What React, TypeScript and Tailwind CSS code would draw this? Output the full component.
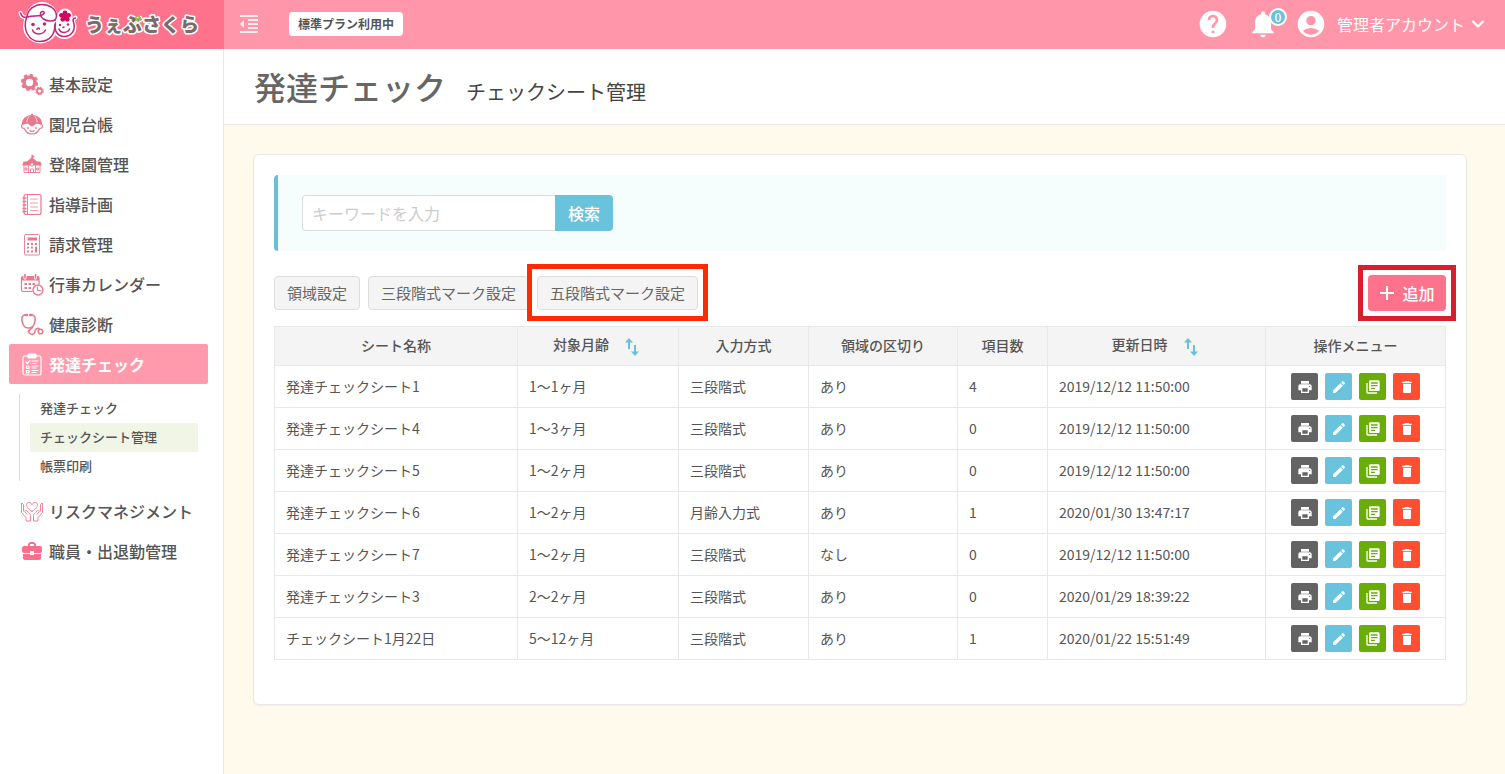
import type { ReactNode } from "react";
import {
  MdAccountCircle,
  MdBusinessCenter,
  MdDelete,
  MdEdit,
  MdFormatIndentDecrease,
  MdHelp,
  MdLibraryBooks,
  MdNotifications,
  MdPrint,
} from "react-icons/md";

function Logo() {
  return (
    <svg className="h-[48px] w-[204px]" viewBox="0 0 204 48" role="img">
      <g fill="#fff" stroke="#fff" strokeWidth="4" strokeLinejoin="round">
        <circle cx="42" cy="18" r="14" />
        <circle cx="40.500" cy="26" r="15.500" />
        <circle cx="64.500" cy="27" r="10" />
        <path d="M20.500 13c1 4 4 5 7 4M74 19l1.500-1.500" fill="none" strokeLinecap="round" />
        <circle cx="65" cy="16" r="5.500" />
      </g>
      <g fill="none" stroke="#c2257a" strokeWidth="1.500" strokeLinecap="round">
        <path d="M20.500 13c1 4 4 5 7 4 5-1.500 9-.5 13-1.500 4-1 5-4 2-4-3 0-3 5 1 7.500 4 2.500 9 2.500 11.500 1" />
        <path d="M27 16.500c1-7.500 8-12 15-12s14 4 14.500 11c0 2.500-.8 3.800-1.500 4.500" />
        <path d="M26.500 17.500c-4 12 2 24 13.500 24 10 0 15-7.500 15-17" />
        <path d="M55.500 23c-2 8 2.500 13.500 8.500 13.500 8 0 12.500-7 9-16 0-1.500 1-2.500 2.500-2.500" />
        <path d="M32.500 30c2 5 10 5.500 13 0M59 29c1.500 4.500 8.500 4.500 10.500 0" />
        <path d="M37 29.500c0-1.500 2-2 2.500-.5M63 27.500l1-.5" />
      </g>
      <g fill="#c2257a">
        <circle cx="33" cy="24.500" r="1.800" />
        <circle cx="44.500" cy="24" r="1.800" />
        <circle cx="60" cy="25" r="1.200" />
        <circle cx="68" cy="24.500" r="1.200" />
      </g>
      <g fill="#d3005f">
        <circle cx="65" cy="12.800" r="2.400" />
        <circle cx="68.500" cy="15.300" r="2.400" />
        <circle cx="67.200" cy="19.300" r="2.400" />
        <circle cx="62.800" cy="19.300" r="2.400" />
        <circle cx="61.500" cy="15.300" r="2.400" />
        <circle cx="65" cy="16.500" r="2.500" />
      </g>
      <text
        x="85"
        y="32"
        fontSize="19"
        fontWeight="900"
        fill="#7a6a69"
        stroke="#fff"
        strokeWidth="3"
        strokeLinejoin="round"
        paintOrder="stroke"
      >
        うぇぶさくら
      </text>
      <path d="M135.500 17.500l2 3M138.500 16l2 3" stroke="#8cc63f" strokeWidth="2" strokeLinecap="round" />
    </svg>
  );
}

function LineIcon({ children }: { children: ReactNode }) {
  return (
    <svg
      className="size-6 shrink-0"
      viewBox="0 0 24 24"
      fill="none"
      stroke="currentColor"
      strokeWidth="1.200"
      strokeLinecap="round"
      strokeLinejoin="round"
      aria-hidden="true"
    >
      {children}
    </svg>
  );
}

const icons = {
  gears: (
    <LineIcon>
      <circle cx="9.500" cy="10.500" r="5.500" strokeWidth="3.600" />
      <circle cx="9.500" cy="10.500" r="7.700" strokeWidth="2" strokeDasharray="3.300 2.750" strokeLinecap="butt" />
      <circle cx="19.500" cy="19" r="2.500" strokeWidth="1.800" />
      <circle cx="19.500" cy="19" r="3.700" strokeWidth="1.100" strokeDasharray="1.600 1.300" strokeLinecap="butt" />
    </LineIcon>
  ),
  child: (
    <LineIcon>
      <path d="M2.500 12C2.500 6.500 7 3.500 12 3.500s9.500 3 9.500 8.500c-5-1.500-14-1.500-19 0z" fill="currentColor" />
      <path d="M12 2.500v1" strokeWidth="2" />
      <path d="M9 4.500c-1.500 1.500-2 3.500-2 5.500M15 4.500c1.500 1.500 2 3.500 2 5.500" stroke="#fff" strokeWidth=".7" />
      <path d="M3 12.500c-2.500-.3-2 4 1.300 4M21 12.500c2.500-.3 2 4-1.300 4M4.300 16.500c1.500 3.500 4.500 5.500 7.700 5.500s6.200-2 7.700-5.500M10 18.500c1 1.200 3 1.200 4 0" />
      <path d="M8.500 11.500h7L12 14z" fill="currentColor" />
      <path d="M8 15.800v.3M16 15.800v.3" strokeWidth="1.800" />
    </LineIcon>
  ),
  school: (
    <LineIcon>
      <path d="M12 7V3M12 3.500l2 1-2 1" />
      <path d="M12 6L16.500 10h-9z" fill="currentColor" />
      <path d="M4 10h16l1 3H3z" fill="currentColor" />
      <path d="M4 13v7.500h16V13M8.500 13v7.500M15.500 13v7.500" strokeWidth=".9" />
      <path d="M10.500 20.500V17h3v3.500M5.500 16H7v2H5.500zM17 16h1.500v2H17z" strokeWidth=".9" />
      <circle cx="12" cy="12.500" r="1.700" fill="#fff" strokeWidth=".9" />
    </LineIcon>
  ),
  notebook: (
    <LineIcon>
      <rect x="4" y="2.500" width="17" height="20" rx="2" />
      <path d="M7.500 3v19" strokeWidth=".9" />
      <path d="M3 6h3M3 9.500h3M3 13h3M3 16.500h3M3 19.500h3" strokeWidth="1.300" />
      <path d="M10.500 7h7M10.500 11h7M10.500 15h7M10.500 18.500h7" strokeWidth=".7" />
    </LineIcon>
  ),
  calculator: (
    <LineIcon>
      <rect x="4.500" y="2.500" width="15" height="20.500" rx="1" strokeWidth=".9" />
      <path d="M7.500 7h9.500" strokeWidth="3" strokeLinecap="butt" />
      <path
        d="M7 12h2M11 12h2M15 12h2M7 15.700h2M11 15.700h2M15 15.700h2M7 19.500h2M11 19.500h2M15 19.500h2"
        strokeWidth="1.800"
        strokeLinecap="butt"
      />
      <path d="M16 15.500v4" strokeWidth="2" strokeLinecap="butt" />
    </LineIcon>
  ),
  calendar: (
    <LineIcon>
      <path d="M12 19.500H3c-1 0-1.500-.5-1.500-1.500V6c0-1 .5-1.500 1.500-1.500h14.500c1 0 1.500.5 1.500 1.500v6" />
      <path d="M2 5.500h16.500v2.500H2z" fill="currentColor" />
      <path d="M5 2.500v3.500M15.500 2.500v3.500" stroke="#fff" strokeWidth="3" />
      <path d="M5 2.500v3.500M15.500 2.500v3.500" strokeWidth="1.600" />
      <path d="M4.500 12H7M8.500 12H11M12.500 12H15M4.500 16H7M8.500 16H11" strokeWidth="2.200" strokeLinecap="butt" />
      <circle cx="18" cy="18" r="5" strokeWidth="1.400" fill="#fff" />
      <path d="M17.500 15v3.500h3" />
    </LineIcon>
  ),
  stethoscope: (
    <LineIcon>
      <g strokeWidth="1.600">
        <path d="M5.500 3C2 3 1.500 5.500 2 9c.6 4 3 7 6.500 7s5.900-3 6.500-7c.5-3.500 0-6-3.500-6" />
        <path d="M5.500 3H7M10 3h1.500" strokeWidth="2.400" />
        <path d="M8.500 20c1.500 3 6 3.500 6.500-.5.200-2.500 2-3.500 4-3" />
        <path d="M8.500 16.500v3.500" strokeWidth="0" />
        <path d="M12.500 15.500c-2 1.500-4 2.500-4 4.500" />
        <circle cx="20.500" cy="19.500" r="2.300" />
      </g>
    </LineIcon>
  ),
  checklist: (
    <LineIcon>
      <rect x="3" y="4" width="18" height="19" rx="2" />
      <rect x="8" y="2" width="8" height="4" rx="1" fill="currentColor" />
      <path d="M6 10l1.300 1.500L10 8.500M12 9h6M12 11.500h4M12 14h6M12 16h4M12 18.500h6M12 20.500h4" />
      <path d="M6.500 14H9v2.300H6.500zM6.500 18.500H9v2.300H6.500z" />
    </LineIcon>
  ),
  hands: (
    <LineIcon>
      <g strokeWidth=".9">
        <path d="M12 12.500C4.500 8 6 3.500 9 3.500c1.500 0 2.500 1 3 2 .5-1 1.500-2 3-2 3 0 4.500 4.500-3 9z" />
        <path d="M1.500 4.500v9l4.500 5v3.500h4.500v-5.500c0-1-1-2-2-3l-2-2c-1-.8-2.300.3-1.500 1.500l2 2.500M1.500 4.500c1.500-.5 2 .5 2 1.500v6" />
        <path d="M22.500 4.500v9L18 18.500v3.500h-4.500v-5.500c0-1 1-2 2-3l2-2c1-.8 2.300.3 1.500 1.500l-2 2.500M22.500 4.500c-1.500-.5-2 .5-2 1.500v6" />
      </g>
    </LineIcon>
  ),
  briefcase: <MdBusinessCenter className="size-6 shrink-0 text-[#f8708b]" aria-hidden="true" />,
};

function MenuItem({ icon, label, active = false }: { icon: ReactNode; label: string; active?: boolean }) {
  return (
    <a
      href="#"
      className={
        active
          ? "flex h-10 items-center gap-[5px] rounded-xs bg-[#ff9aad] pl-[11px] font-bold text-white"
          : "flex h-10 items-center gap-[5px] pl-[11px] font-medium text-[#555]"
      }
    >
      <span className={active ? "text-white" : "text-[#e8798d]"}>{icon}</span>
      {label}
    </a>
  );
}

function Sidebar() {
  return (
    <nav className="w-[224px] shrink-0 border-r border-[#e8e8e8] bg-white pt-[15px] pr-[15px] pl-[9px] text-base">
      <MenuItem icon={icons.gears} label="基本設定" />
      <MenuItem icon={icons.child} label="園児台帳" />
      <MenuItem icon={icons.school} label="登降園管理" />
      <MenuItem icon={icons.notebook} label="指導計画" />
      <MenuItem icon={icons.calculator} label="請求管理" />
      <MenuItem icon={icons.calendar} label="行事カレンダー" />
      <MenuItem icon={icons.stethoscope} label="健康診断" />
      <MenuItem icon={icons.checklist} label="発達チェック" active />
      <div className="my-[10px] ml-[10px] border-l border-[#ddd] pr-[10px] pl-[10px] text-[13px] font-medium text-[#555]">
        <a href="#" className="flex h-[29px] items-center px-[10px] pb-0.5">
          発達チェック
        </a>
        <a href="#" className="flex h-[29px] items-center rounded-xs bg-[#f0f5e6] px-[10px] pb-0.5">
          チェックシート管理
        </a>
        <a href="#" className="flex h-[29px] items-center px-[10px] pb-0.5">
          帳票印刷
        </a>
      </div>
      <MenuItem icon={icons.hands} label="リスクマネジメント" />
      <MenuItem icon={icons.briefcase} label="職員・出退勤管理" />
    </nav>
  );
}

function Header() {
  return (
    <header className="flex h-[49px] bg-[#ff96a9] text-white">
      <a href="#" className="flex w-[224px] shrink-0 bg-[#ff728c]" aria-label="うぇぶさくら">
        <Logo />
      </a>
      <div className="flex flex-1 items-center pr-5 pb-px pl-[13px]">
        <button type="button" aria-label="メニューを閉じる">
          <MdFormatIndentDecrease className="size-6 text-[#fdeef0]" />
        </button>
        <span className="ml-[28px] flex h-6 items-center rounded-sm bg-white px-[9px] text-xs font-bold text-[#555]">
          標準プラン利用中
        </span>
        <div className="ml-auto flex items-center">
          <button type="button" aria-label="ヘルプ">
            <MdHelp className="size-8" />
          </button>
          <button type="button" className="relative ml-[18px]" aria-label="お知らせ">
            <MdNotifications className="size-8" />
            <span className="absolute top-0 -right-2 flex size-[18px] items-center justify-center rounded-full border-2 border-white bg-[#6ac3dc] text-[12px] leading-none font-medium">
              0
            </span>
          </button>
          <button type="button" className="ml-4 flex items-center text-base">
            <MdAccountCircle className="mr-[10px] size-8" />
            管理者アカウント
            <svg
              className="ml-[6px] h-3 w-[14px]"
              viewBox="0 0 14 12"
              fill="none"
              stroke="currentColor"
              strokeWidth="2.200"
              aria-hidden="true"
            >
              <path d="M1.500 3L7 8.500 12.500 3" />
            </svg>
          </button>
        </div>
      </div>
    </header>
  );
}

function SortButton({ label }: { label: string }) {
  return (
    <button type="button" className="mr-1 ml-4 align-middle text-[#6bbfda]" aria-label={label}>
      <svg className="h-[18px] w-[14px]" viewBox="0 0 14 18" fill="currentColor" aria-hidden="true">
        <path d="M4 0l4 4.500H5V11H3V4.500H0zM10 18l-4-4.500h3V7h2v6.500h3z" />
      </svg>
    </button>
  );
}

const sheets = [
  { name: "発達チェックシート1", age: "1〜1ヶ月", input: "三段階式", divided: "あり", count: 4, updated: "2019/12/12 11:50:00" },
  { name: "発達チェックシート4", age: "1〜3ヶ月", input: "三段階式", divided: "あり", count: 0, updated: "2019/12/12 11:50:00" },
  { name: "発達チェックシート5", age: "1〜2ヶ月", input: "三段階式", divided: "あり", count: 0, updated: "2019/12/12 11:50:00" },
  { name: "発達チェックシート6", age: "1〜2ヶ月", input: "月齢入力式", divided: "あり", count: 1, updated: "2020/01/30 13:47:17" },
  { name: "発達チェックシート7", age: "1〜2ヶ月", input: "三段階式", divided: "なし", count: 0, updated: "2019/12/12 11:50:00" },
  { name: "発達チェックシート3", age: "2〜2ヶ月", input: "三段階式", divided: "あり", count: 0, updated: "2020/01/29 18:39:22" },
  { name: "チェックシート1月22日", age: "5〜12ヶ月", input: "三段階式", divided: "あり", count: 1, updated: "2020/01/22 15:51:49" },
];

const th = "h-[39px] border border-[#e8e8e8] bg-[#f4f4f4] px-0 pt-0 pb-0.5 text-center font-medium";
const td = "h-[42px] border border-[#e8e8e8] px-[11px] pt-0 pb-0.5";
const action = "flex size-[27px] items-center justify-center rounded-xs text-white";

function SheetTable() {
  return (
    <table className="mt-4 w-full table-fixed border-collapse text-sm text-[#555]">
      <thead>
        <tr>
          <th className={th}>シート名称</th>
          <th className={`${th} w-[161px]`}>
            対象月齢
            <SortButton label="対象月齢で並べ替え" />
          </th>
          <th className={`${th} w-[130px]`}>入力方式</th>
          <th className={`${th} w-[149px]`}>領域の区切り</th>
          <th className={`${th} w-[90px]`}>項目数</th>
          <th className={`${th} w-[218px]`}>
            更新日時
            <SortButton label="更新日時で並べ替え" />
          </th>
          <th className={`${th} w-[180px]`}>操作メニュー</th>
        </tr>
      </thead>
      <tbody>
        {sheets.map((sheet) => (
          <tr key={sheet.name}>
            <td className={td}>{sheet.name}</td>
            <td className={td}>{sheet.age}</td>
            <td className={td}>{sheet.input}</td>
            <td className={td}>{sheet.divided}</td>
            <td className={td}>{sheet.count}</td>
            <td className={td}>{sheet.updated}</td>
            <td className="h-[42px] border border-[#e8e8e8] p-0">
              <div className="flex justify-center gap-[7px]">
                <button type="button" className={`${action} bg-[#636363]`} aria-label="印刷">
                  <MdPrint className="size-4" />
                </button>
                <button type="button" className={`${action} bg-[#6ac3dc]`} aria-label="編集">
                  <MdEdit className="size-4" />
                </button>
                <button type="button" className={`${action} bg-[#6aac08]`} aria-label="複製">
                  <MdLibraryBooks className="size-4" />
                </button>
                <button type="button" className={`${action} bg-[#ff4e30]`} aria-label="削除">
                  <MdDelete className="size-4" />
                </button>
              </div>
            </td>
          </tr>
        ))}
      </tbody>
    </table>
  );
}

const settingButton = "h-[34px] rounded-sm border border-[#ddd] bg-[#f4f4f4] px-3 text-[15px] text-[#666]";

export default function App() {
  return (
    <div className="flex min-h-screen flex-col font-['Noto_Sans_CJK_JP',sans-serif]">
      <Header />
      <div className="flex flex-1">
        <Sidebar />
        <main className="min-w-0 flex-1 bg-[#fffaec]">
          <div className="flex h-[76px] items-baseline gap-5 border-b border-[#e8e8e8] bg-white pt-[13px] pl-[30px]">
            <h1 className="text-[32px] leading-[48px] font-medium text-[#666]">発達チェック</h1>
            <p className="text-xl text-[#444]">チェックシート管理</p>
          </div>

          <section className="mt-[29px] mr-[38px] mb-[69px] ml-[29px] rounded-md border border-[#e8e8e8] bg-white px-5 pt-5 pb-11 shadow-xs">
            <form className="flex h-[76px] items-center rounded-l-sm border-l-4 border-[#6bbfd4] bg-[#f5fdfd] pl-6">
              <input
                type="text"
                aria-label="キーワード"
                placeholder="キーワードを入力"
                className="h-9 w-[253px] rounded-l-sm border border-r-0 border-[#ddd] bg-white px-[9px] text-base placeholder:text-[#ccc]"
              />
              <button type="button" className="h-9 w-[58px] rounded-r-sm bg-[#6ac3dc] text-base font-medium text-white">
                検索
              </button>
            </form>

            <div className="mt-[25px] flex h-[34px] items-center gap-2">
              <button type="button" className={settingButton}>
                領域設定
              </button>
              <button type="button" className={settingButton}>
                三段階式マーク設定
              </button>
              <div className="relative">
                <button type="button" className={settingButton}>
                  五段階式マーク設定
                </button>
                <span className="pointer-events-none absolute -inset-x-[10px] -top-3 -bottom-[11px] border-[5px] border-[#fb2b05]" />
              </div>
              <div className="relative ml-auto">
                <button
                  type="button"
                  className="flex h-9 w-[78px] items-center justify-center gap-[7px] rounded-sm bg-[#ff728c] text-base font-medium text-white"
                >
                  <svg className="size-4" viewBox="0 0 16 16" stroke="currentColor" strokeWidth="2" aria-hidden="true">
                    <path d="M8 1v14M1 8h14" />
                  </svg>
                  追加
                </button>
                <span className="pointer-events-none absolute -inset-[10px] border-[5px] border-[#d91f2d]" />
              </div>
            </div>

            <SheetTable />
          </section>
        </main>
      </div>
    </div>
  );
}
